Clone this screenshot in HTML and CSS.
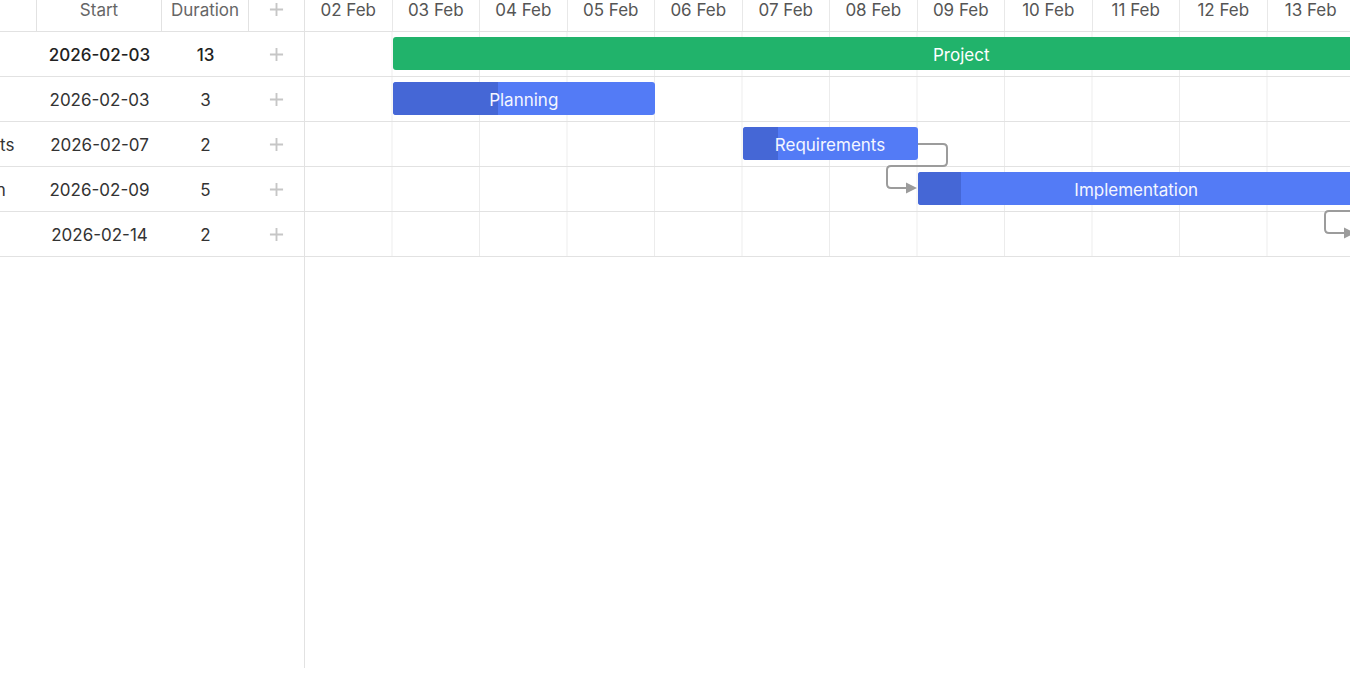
FILE: index.html
```html
<!DOCTYPE html>
<html lang="en">
<head>
    <meta charset="UTF-8">
    <meta name="viewport" content="width=device-width, initial-scale=1.0">
    <title>Gantt</title>
    <link rel="stylesheet" href="styles.css">
</head>
<body>
    <div class="gantt">
        <!-- 左侧表格 -->
        <div class="grid">
            <div class="grid-inner">
                <div class="grid-head">
                    <div class="cell c-name">Task name</div>
                    <div class="cell c-start">Start</div>
                    <div class="cell c-dur">Duration</div>
                    <div class="cell c-add"><svg class="plus" viewBox="0 0 16 16"><path d="M8 1v14M1 8h14"/></svg></div>
                </div>
                <div class="grid-row summary">
                    <div class="cell c-name lv0">Project</div>
                    <div class="cell c-start">2026-02-03</div>
                    <div class="cell c-dur">13</div>
                    <div class="cell c-add"><svg class="plus" viewBox="0 0 16 16"><path d="M8 1v14M1 8h14"/></svg></div>
                </div>
                <div class="grid-row">
                    <div class="cell c-name lv1">Planning</div>
                    <div class="cell c-start">2026-02-03</div>
                    <div class="cell c-dur">3</div>
                    <div class="cell c-add"><svg class="plus" viewBox="0 0 16 16"><path d="M8 1v14M1 8h14"/></svg></div>
                </div>
                <div class="grid-row">
                    <div class="cell c-name lv2">Requirements</div>
                    <div class="cell c-start">2026-02-07</div>
                    <div class="cell c-dur">2</div>
                    <div class="cell c-add"><svg class="plus" viewBox="0 0 16 16"><path d="M8 1v14M1 8h14"/></svg></div>
                </div>
                <div class="grid-row">
                    <div class="cell c-name lv1">Implementation</div>
                    <div class="cell c-start">2026-02-09</div>
                    <div class="cell c-dur">5</div>
                    <div class="cell c-add"><svg class="plus" viewBox="0 0 16 16"><path d="M8 1v14M1 8h14"/></svg></div>
                </div>
                <div class="grid-row">
                    <div class="cell c-name lv1">Testing</div>
                    <div class="cell c-start">2026-02-14</div>
                    <div class="cell c-dur">2</div>
                    <div class="cell c-add"><svg class="plus" viewBox="0 0 16 16"><path d="M8 1v14M1 8h14"/></svg></div>
                </div>
            </div>
        </div>

        <!-- 右侧时间轴 -->
        <div class="chart">
            <div class="scale">
                <div class="day">02 Feb</div>
                <div class="day">03 Feb</div>
                <div class="day">04 Feb</div>
                <div class="day">05 Feb</div>
                <div class="day">06 Feb</div>
                <div class="day">07 Feb</div>
                <div class="day">08 Feb</div>
                <div class="day">09 Feb</div>
                <div class="day">10 Feb</div>
                <div class="day">11 Feb</div>
                <div class="day">12 Feb</div>
                <div class="day">13 Feb</div>
                <div class="day">14 Feb</div>
                <div class="day">15 Feb</div>
                <div class="day">16 Feb</div>
                <div class="day">17 Feb</div>
            </div>
            <div class="area">
                <div class="row-bg"></div>
                <div class="row-bg"></div>
                <div class="row-bg"></div>
                <div class="row-bg"></div>
                <div class="row-bg"></div>

                <!-- 依赖连线 -->
                <svg class="links" width="1400" height="225">
                    <path d="M612 112H638Q642 112 642 116V130Q642 134 638 134H586Q582 134 582 138V152Q582 156 586 156H603"/>
                    <polygon points="601,150.5 612,156 601,161.5"/>
                    <path d="M1050 157H1076Q1080 157 1080 161V175Q1080 179 1076 179H1024Q1020 179 1020 183V197Q1020 201 1024 201H1041"/>
                    <polygon points="1039,195.5 1050,201 1039,206.5"/>
                </svg>

                <div class="bar summary" style="top:5px; left:87.5px; width:1137.5px"><span>Project</span></div>
                <div class="bar" style="top:50px; left:87.5px; width:262.5px"><i class="progress" style="width:40%"></i><span>Planning</span></div>
                <div class="bar" style="top:95px; left:437.5px; width:175px"><i class="progress" style="width:20%"></i><span>Requirements</span></div>
                <div class="bar" style="top:140px; left:612.5px; width:437.5px"><i class="progress" style="width:10%"></i><span>Implementation</span></div>
                <div class="bar" style="top:185px; left:1050px; width:175px"><i class="progress" style="width:0%"></i><span>Testing</span></div>
            </div>
        </div>
    </div>
</body>
</html>
```

FILE: styles.css
```css
* {
    margin: 0;
    padding: 0;
    box-sizing: border-box;
}

body {
    font-family: Inter, "Liberation Sans", sans-serif;
    font-size: 17px;
    color: #333;
    background: #fff;
}

.gantt {
    display: flex;
    height: 668px;
    overflow: hidden;
}

/* 表格 */
.grid {
    width: 305px;
    flex-shrink: 0;
    border-right: 1px solid #e2e2e2;
    overflow: hidden;
}

/* 名称列被横向滚动了 */
.grid-inner {
    width: 467px;
    margin-left: -163px;
}

.grid-head,
.grid-row {
    display: flex;
    border-bottom: 1px solid #e2e2e2;
}

.grid-head {
    height: 32px;
    color: #666;
}

.grid-row {
    height: 45px;
    padding-top: 1px;
}

.cell {
    display: flex;
    align-items: center;
    justify-content: center;
    white-space: nowrap;
    overflow: hidden;
}

.grid-head .cell {
    align-items: flex-start;
    line-height: 20px;
    border-right: 1px solid #e2e2e2;
}

.grid-head .c-add {
    border-right: none;
    padding-top: 2px;
}

.c-name {
    width: 200px;
    justify-content: flex-start;
    padding-left: 12px;
}

/* 树形缩进 */
.c-name.lv0 { padding-left: 4px; }
.c-name.lv1 { padding-left: 45px; }
.c-name.lv2 { padding-left: 67px; }

.c-start { width: 125px; }
.c-dur { width: 87px; }
.c-add { width: 55px; }

.grid-row.summary {
    font-weight: 500;
    color: #222;
}

.plus {
    width: 15px;
    height: 15px;
    fill: none;
    stroke: #c6c6c6;
    stroke-width: 2;
}

/* 时间轴 */
.chart {
    flex: 1;
    overflow: hidden;
}

.scale {
    display: flex;
    height: 32px;
    width: 1400px;
    border-bottom: 1px solid #e2e2e2;
    color: #555;
}

.day {
    width: 87.5px;
    flex-shrink: 0;
    text-align: center;
    line-height: 20px;
    border-right: 1px solid #e8e8e8;
}

.area {
    position: relative;
    width: 1400px;
}

.row-bg {
    height: 45px;
    border-bottom: 1px solid #e2e2e2;
    background-image: linear-gradient(to left, #ececec 1px, transparent 1px);
    background-size: 87.5px 100%;
}

.links {
    position: absolute;
    left: 0;
    top: 0;
    overflow: visible;
}

.links path {
    fill: none;
    stroke: #9c9c9c;
    stroke-width: 2;
}

.links polygon {
    fill: #9c9c9c;
}

.bar {
    position: absolute;
    height: 33px;
    padding-top: 2px;
    border-radius: 3px;
    background: #537bf6;
    color: #f4f6ff;
    display: flex;
    align-items: center;
    justify-content: center;
    overflow: hidden;
    white-space: nowrap;
}

.bar.summary {
    background: #21b36b;
    color: #fff;
}

.bar .progress {
    position: absolute;
    left: 0;
    top: 0;
    bottom: 0;
    background: #4567d6;
}

.bar span {
    position: relative;
}
```
